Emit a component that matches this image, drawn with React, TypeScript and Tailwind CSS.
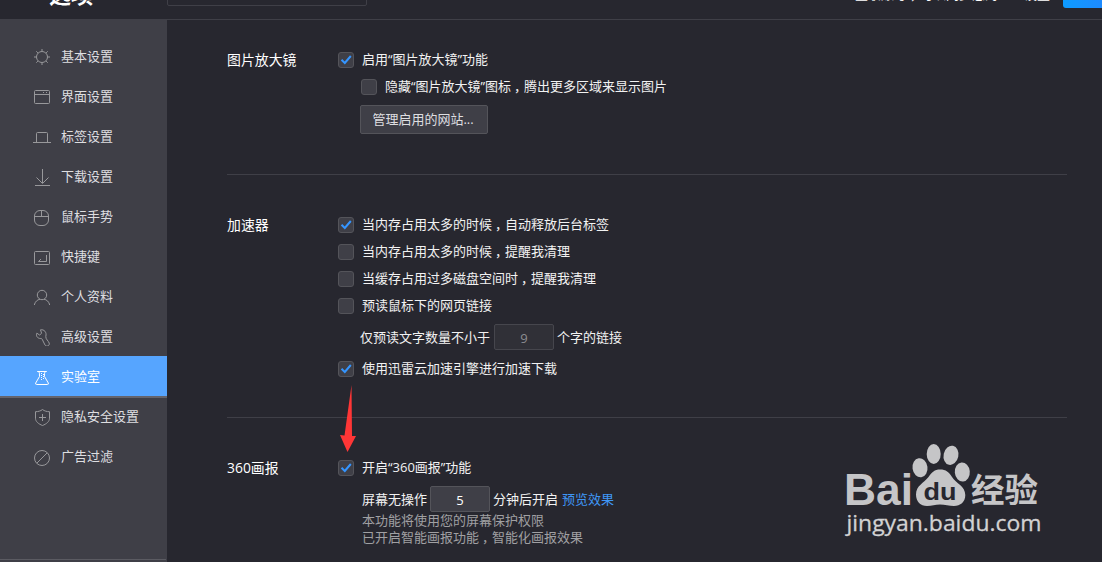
import { Fragment, type ReactNode } from "react";

type NavItem = {
  label: string;
  icon: ReactNode;
  active?: boolean;
};

const navItems: NavItem[] = [
  {
    label: "基本设置",
    icon: (
      <>
        <circle cx="10" cy="11" r="5.5" />
        <path d="M10 3v2M10 17v2M2 11h2M16 11h2M4.3 5.3l1.6 1.6M14.1 15.1l1.6 1.6M4.3 16.7l1.6-1.6M14.1 6.9l1.6-1.6" />
      </>
    ),
  },
  {
    label: "界面设置",
    icon: (
      <>
        <rect x="2.5" y="4.5" width="15" height="13" rx="1" />
        <path d="M2.5 8.5h15M11 6.5h1M14 6.5h1" />
      </>
    ),
  },
  {
    label: "标签设置",
    icon: <path d="M1 16.5h18M4.5 16.5v-9q0-1 1-1h9q1 0 1 1v9" />,
  },
  {
    label: "下载设置",
    icon: <path d="M3 19.5h15M10.5 3v14M4.5 11.5l6 6 6-6" />,
  },
  {
    label: "鼠标手势",
    icon: (
      <>
        <rect x="2.5" y="4.5" width="14" height="15" rx="5.5" />
        <path d="M2.5 10.5h14M9.5 4.5v6" />
      </>
    ),
  },
  {
    label: "快捷键",
    icon: (
      <>
        <rect x="2.5" y="5.5" width="15" height="13" rx="1" />
        <path d="M14.5 9v6.5h-8l2.5-2.5" />
      </>
    ),
  },
  {
    label: "个人资料",
    icon: (
      <>
        <circle cx="10" cy="9" r="4.7" />
        <path d="M2.3 19c.8-3.4 3-5.3 5.7-5.8M17.7 19c-.8-3.4-3-5.3-5.7-5.8" />
      </>
    ),
  },
  {
    label: "高级设置",
    icon: (
      <path d="M8.5 3.8 9.600 7.300 7.600 9 4.800 7.200C3.700 10 5.500 12.600 8.800 12.500c1.200 0 1.700 1 2.200 2.500l2 4c1.500 2.200 5 .7 4.200-2-.7-2-3.700-4-3.400-6.500C15 6 12 3.200 8.500 3.800z" />
    ),
  },
  {
    label: "实验室",
    active: true,
    icon: (
      <>
        <path d="M5.200 5.500h9.600M6.800 5.500q.9 1 .7 5L3.700 17q-.5 1.500 1 1.500h10.600q1.500 0 1-1.500l-3.800-6.500q-.2-4 .7-5" />
        <path d="M9.500 7v8M11.500 8v5" strokeDasharray="1 1" />
      </>
    ),
  },
  {
    label: "隐私安全设置",
    icon: (
      <>
        <path d="M10.5 3.5c2 1.6 4.4 2.2 7 2.2v6.5c0 3.5-3.2 5.8-7 7.3-3.8-1.5-7-3.8-7-7.3V5.7c2.600 0 5-.6 7-2.200z" />
        <path d="M10.500 8v7M7 11.500h7" />
      </>
    ),
  },
  {
    label: "广告过滤",
    icon: (
      <>
        <circle cx="10" cy="12" r="7.500" />
        <path d="M4.800 17.200 15.200 6.800" />
      </>
    ),
  },
];

// Nudges the full-width comma towards the middle of its cell
function Text({ children }: { children: string }) {
  return (
    <>
      {children.split("，").map((part, i) => (
        <Fragment key={i}>
          {i > 0 && <span className="relative left-[3px]">，</span>}
          {part}
        </Fragment>
      ))}
    </>
  );
}

function Header() {
  return (
    <header className="flex h-5 shrink-0 items-end overflow-hidden border-b border-[#3f3f47]">
      <div className="flex h-5 w-[167px] shrink-0 items-end pb-3 pl-[49px] text-[22px] leading-[25px] font-bold text-white">
        选项
      </div>
      <div className="mb-[13px] h-7 w-[200px] shrink-0 rounded-[2px] border border-[#3f3f47]" />
      <div className="ml-[488px] w-[208px] shrink-0 pb-4 text-[13px] leading-[18px] whitespace-nowrap text-white">
        <Text>登录账号，可以同步您的个人设置</Text>
      </div>
      <div className="mb-[11px] h-7 w-20 shrink-0 rounded-[3px] bg-linear-to-r from-[#0c9bff] to-[#2878ff]" />
    </header>
  );
}

function Sidebar() {
  return (
    <nav className="flex w-[167px] shrink-0 flex-col bg-[#3f3f47] pt-4">
      {navItems.map((item) => (
        <div
          key={item.label}
          className={
            item.active
              ? "flex h-10 items-center bg-[#56a5ff] pl-8 text-white shadow-[0_2px_0_#64646c]"
              : "flex h-10 items-center pl-8 text-[#dedee0]"
          }
        >
          <svg
            viewBox="0 0 20 20"
            className={item.active ? "size-5 text-white" : "size-5 text-[#98989b]"}
            fill="none"
            stroke="currentColor"
            strokeWidth="1"
          >
            {item.icon}
          </svg>
          <span className="ml-[9px] text-[13px] leading-5">{item.label}</span>
        </div>
      ))}
      <div className="mt-auto mr-px mb-[2px] h-px bg-[#5b5b62]" />
    </nav>
  );
}

function CheckRow({ label, checked, indent }: { label: string; checked?: boolean; indent?: boolean }) {
  return (
    <label className={indent ? "flex h-[27px] items-center pl-[23px]" : "flex h-[27px] items-center"}>
      <span className="flex size-4 items-center justify-center rounded-[3px] border border-[#54545a] bg-[#3f3f47]">
        {checked && (
          <svg viewBox="0 0 14 14" className="size-3.5 shrink-0" fill="none" stroke="#3595ff" strokeWidth="2">
            <path d="M2.500 6.800 5.800 10 11.800 3" />
          </svg>
        )}
      </span>
      <span className="ml-2 pb-px whitespace-nowrap">
        <Text>{label}</Text>
      </span>
    </label>
  );
}

function Section({ title, children, className }: { title: string; children: ReactNode; className: string }) {
  return (
    <section className={`flex ${className}`}>
      <h2 className="w-[111px] shrink-0 text-[13.9px] leading-[27px] text-white">{title}</h2>
      <div className="min-w-0 flex-1">{children}</div>
    </section>
  );
}

function Arrow() {
  return (
    <svg className="absolute top-[384px] left-[338px] h-[70px] w-5" viewBox="0 0 20 70">
      <path d="M13.500 1 14 52h4L9.500 68 2 51l4.500.500z" fill="#ff3636" />
    </svg>
  );
}

function Watermark() {
  return (
    <svg className="absolute top-[430px] left-[830px] h-[120px] w-[230px]" viewBox="0 0 230 120" fill="#c5c5c7">
      <text x="14" y="74.500" fontFamily="Liberation Sans" fontWeight="700" fontSize="44" textLength="69" lengthAdjust="spacingAndGlyphs">
        Bai
      </text>
      <ellipse cx="90" cy="37.800" rx="7.500" ry="9.600" transform="rotate(-8 90 37.800)" />
      <ellipse cx="103.700" cy="24" rx="7" ry="10" />
      <ellipse cx="121" cy="25.300" rx="7.400" ry="9.700" transform="rotate(12 121 25.300)" />
      <ellipse cx="132.300" cy="42" rx="7.500" ry="9.600" transform="rotate(-5 132.300 42)" />
      <path d="M110 39.500c6 0 9 2.500 12 7.500 4 6.500 13.300 9 13.300 18 0 7-5 11-11.300 11-5 0-9-1.500-14-1.500S102 76 97 76c-6.500 0-11-4.500-11-11.500 0-9 8-11.500 12.500-17.500 3.500-5 6-7.500 11.500-7.500z" />
      <text x="93.500" y="69.700" fontFamily="Liberation Sans" fontWeight="700" fontSize="23.500" textLength="33" lengthAdjust="spacingAndGlyphs" fill="#27272f">
        du
      </text>
      <text x="141" y="72" fontFamily="Noto Sans CJK SC" fontWeight="700" fontSize="33.500">
        经验
      </text>
      <text x="16.500" y="100.700" fontFamily="Open Sans" fontWeight="400" fontSize="22.500" textLength="195" lengthAdjust="spacingAndGlyphs" fill="#d2d2d3" stroke="#d2d2d3" strokeWidth="0.3">
        jingyan.baidu.com
      </text>
    </svg>
  );
}

export default function App() {
  return (
    <div className="relative flex h-[562px] w-[1102px] flex-col overflow-hidden bg-[#27272f] font-['Open_Sans','Noto_Sans_CJK_SC',sans-serif] text-[13px] leading-5 text-[#f2f2f2]">
      <Header />
      <div className="flex min-h-0 flex-1">
        <Sidebar />
        <main className="min-w-0 flex-1 pr-[35px] pl-[60px]">
          {/* Image magnifier */}
          <Section title="图片放大镜" className="h-[155px] border-b border-[#3f3f47] pt-[26px]">
            <CheckRow label="启用“图片放大镜”功能" checked />
            <CheckRow label="隐藏“图片放大镜”图标，腾出更多区域来显示图片" indent />
            <button className="mt-[5px] ml-[22px] block h-[29px] w-32 rounded-[2px] border border-[#54545a] bg-[#3f3f47] pr-0.5 pb-0.5 text-[#dedee0]">
              管理启用的网站...
            </button>
          </Section>

          {/* Accelerator */}
          <Section title="加速器" className="h-[243px] border-b border-[#3f3f47] pt-9">
            <CheckRow label="当内存占用太多的时候，自动释放后台标签" checked />
            <CheckRow label="当内存占用太多的时候，提醒我清理" />
            <CheckRow label="当缓存占用过多磁盘空间时，提醒我清理" />
            <CheckRow label="预读鼠标下的网页链接" />
            <div className="mt-[5px] mb-[5px] flex h-[26px] items-center pl-[22px]">
              仅预读文字数量不小于
              <span className="mr-[3px] ml-1 flex h-[26px] w-[60px] items-center justify-center rounded-[2px] border border-[#46464d] bg-[#303037] pt-[2px] text-[#8c8c90]">
                9
              </span>
              个字的链接
            </div>
            <CheckRow label="使用迅雷云加速引擎进行加速下载" checked />
          </Section>

          {/* 360 pictorial */}
          <Section title="360画报" className="pt-9">
            <CheckRow label="开启“360画报”功能" checked />
            <div className="mt-[5px] flex h-[26px] items-center pl-6">
              屏幕无操作
              <span className="mr-[3px] ml-[3px] flex h-[26px] w-[60px] items-center justify-center rounded-[2px] border border-[#54545a] bg-[#3f3f47] pt-[2px] text-white">
                5
              </span>
              分钟后开启
              <a className="ml-1 text-[#3f97f6]">预览效果</a>
            </div>
            <div className="pl-6 leading-[17px] text-[#a0a0a3]">
              <p>本功能将使用您的屏幕保护权限</p>
              <p>
                <Text>已开启智能画报功能，智能化画报效果</Text>
              </p>
            </div>
          </Section>
        </main>
      </div>
      <Arrow />
      <Watermark />
    </div>
  );
}
